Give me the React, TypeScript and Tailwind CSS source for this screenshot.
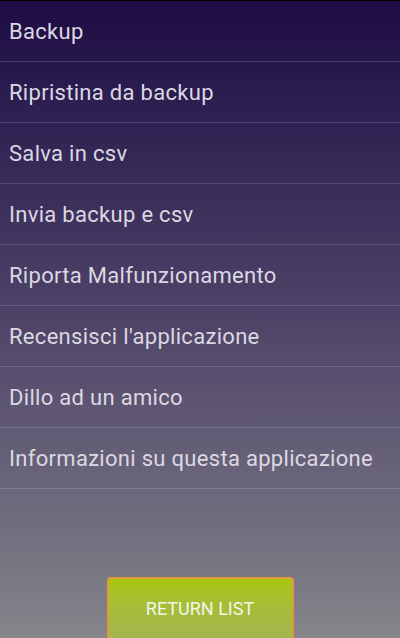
const items = [
  "Backup",
  "Ripristina da backup",
  "Salva in csv",
  "Invia backup e csv",
  "Riporta Malfunzionamento",
  "Recensisci l'applicazione",
  "Dillo ad un amico",
  "Informazioni su questa applicazione",
];

export default function App() {
  return (
    <div
      className="flex h-[638px] w-[400px] flex-col overflow-hidden border-t border-black bg-gradient-to-b from-[#1e0b44] via-[#4f4468] to-[#85858a]"
      style={{ fontFamily: "Roboto, 'Noto Sans', sans-serif" }}
    >
      <ul>
        {items.map((label) => (
          <li
            key={label}
            className="flex h-[61px] items-center border-b border-white/15 pl-[9px] text-[22px] tracking-[0.3px] text-[#dcd8e2]"
          >
            {label}
          </li>
        ))}
      </ul>
      <div className="flex-1" />
      <div className="flex justify-center">
        <button className="mb-[-2px] h-[63px] w-[187px] rounded-[4px] border-2 border-[#e09a3a] bg-gradient-to-b from-[#a9c60a] to-[#a3b54e] text-[18px] text-[#f4f6ea]">
          RETURN LIST
        </button>
      </div>
    </div>
  );
}
